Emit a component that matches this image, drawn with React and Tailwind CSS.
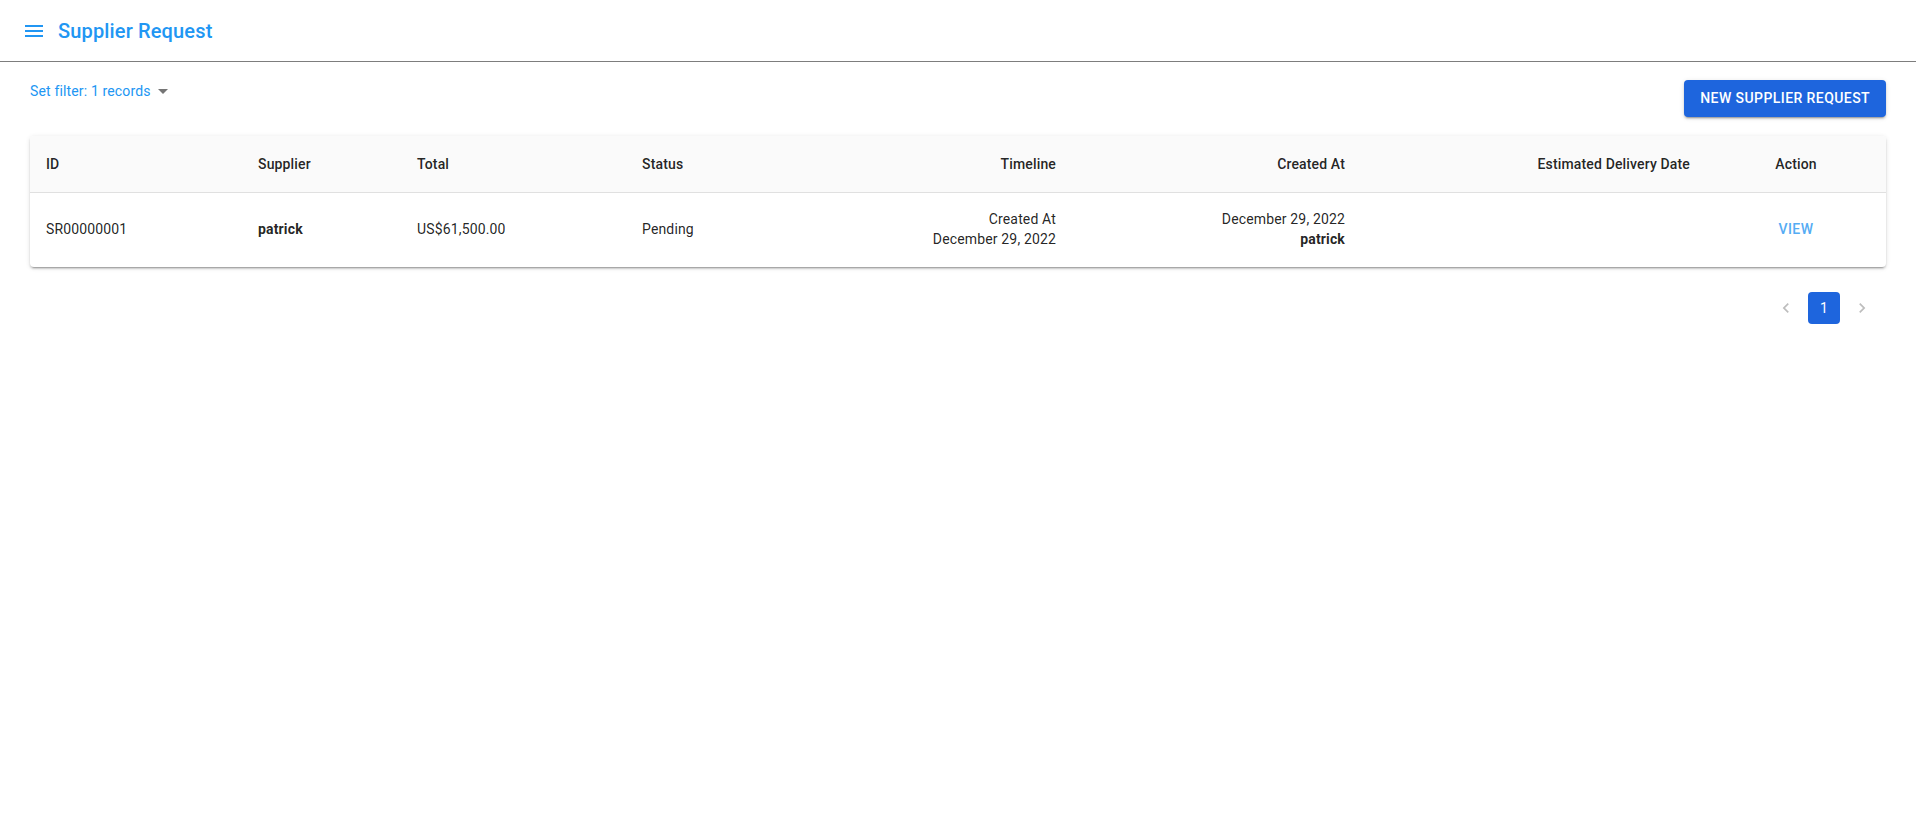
import React from 'react';

const columns = [
  { key: 'id', label: 'ID', width: 'w-[212px]', align: 'text-left' },
  { key: 'supplier', label: 'Supplier', width: 'w-[159px]', align: 'text-left' },
  { key: 'total', label: 'Total', width: 'w-[225px]', align: 'text-left' },
  { key: 'status', label: 'Status', width: 'w-[223px]', align: 'text-left' },
  { key: 'timeline', label: 'Timeline', width: 'w-[223px]', align: 'text-right' },
  { key: 'created', label: 'Created At', width: 'w-[289px]', align: 'text-right' },
  { key: 'eta', label: 'Estimated Delivery Date', width: 'w-[345px]', align: 'text-right' },
  { key: 'action', label: 'Action', width: 'w-[180px]', align: 'text-center' },
];

const rows = [
  {
    id: 'SR00000001',
    supplier: 'patrick',
    total: 'US$61,500.00',
    status: 'Pending',
    createdAt: 'December 29, 2022',
    createdBy: 'patrick',
  },
];

const MenuIcon = () => (
  <svg viewBox="0 0 24 24" className="w-6 h-6 fill-[#2196f3]">
    <path d="M3 18h18v-2H3v2zm0-5h18v-2H3v2zm0-7v2h18V6H3z" />
  </svg>
);

const ArrowDrop = () => (
  <svg viewBox="0 0 24 24" className="w-6 h-6 fill-[#757575]">
    <path d="M7 10l5 5 5-5z" />
  </svg>
);

const Chevron = ({ dir }) => (
  <svg viewBox="0 0 24 24" className="w-5 h-5 fill-[#bdbdbd]">
    {dir === 'left' ? (
      <path d="M15.41 7.41 14 6l-6 6 6 6 1.41-1.41L10.83 12z" />
    ) : (
      <path d="M10 6 8.59 7.41 13.17 12l-4.58 4.59L10 18l6-6z" />
    )}
  </svg>
);

// celda do corpo da tabela
const cell = 'px-4 pt-4 pb-[18px] leading-5 tracking-[0.01071em]';

export default function App() {
  return (
    <div className="min-h-screen bg-white font-['Roboto',sans-serif] text-[rgba(0,0,0,0.87)]">
      {/* top bar */}
      <header className="h-[62px] flex items-center pl-[22px] gap-3 border-b border-[#7d7d7d] bg-white">
        <button className="flex items-center">
          <MenuIcon />
        </button>
        <h1 className="text-[20px] font-medium text-[#2196f3] tracking-[0.0075em] leading-none">
          Supplier Request
        </h1>
      </header>

      <main className="px-[30px] pt-[18px]">
        <div className="flex justify-between items-start">
          <button className="h-[22px] flex items-center text-[14px] text-[#2196f3] tracking-[0.01071em]">
            Set filter: 1 records
            <span className="ml-0">
              <ArrowDrop />
            </span>
          </button>
          <button className="h-[37px] px-4 rounded-[4px] bg-[#1e65dd] text-white text-[14px] font-medium uppercase tracking-[0.03em] shadow-[0px_3px_1px_-2px_rgba(0,0,0,0.2),0px_2px_2px_0px_rgba(0,0,0,0.14),0px_1px_5px_0px_rgba(0,0,0,0.12)]">
            New Supplier Request
          </button>
        </div>

        {/* table card */}
        <div className="mt-[19px] bg-white rounded-[4px] overflow-hidden shadow-[0px_3px_1px_-2px_rgba(0,0,0,0.2),0px_2px_2px_0px_rgba(0,0,0,0.14),0px_1px_5px_0px_rgba(0,0,0,0.12)]">
          <table className="w-full table-fixed border-collapse text-[14px]">
            <thead>
              <tr className="bg-[#fafafa]">
                {columns.map((c) => (
                  <th
                    key={c.key}
                    className={`${c.width} ${c.align} px-4 py-4 leading-6 font-medium tracking-[0.01071em] border-b border-[#e0e0e0]`}
                  >
                    {c.label}
                  </th>
                ))}
              </tr>
            </thead>
            <tbody>
              {rows.map((r) => (
                <tr key={r.id}>
                  <td className={cell}>{r.id}</td>
                  <td className={`${cell} font-bold`}>{r.supplier}</td>
                  <td className={cell}>{r.total}</td>
                  <td className={cell}>{r.status}</td>
                  <td className={`${cell} text-right`}>
                    <div>Created At</div>
                    <div>{r.createdAt}</div>
                  </td>
                  <td className={`${cell} text-right`}>
                    <div>{r.createdAt}</div>
                    <div className="font-bold">{r.createdBy}</div>
                  </td>
                  <td className={`${cell} text-right`}></td>
                  <td className={`${cell} text-center`}>
                    <button className="text-[#55acf4] font-medium uppercase tracking-[0.03em]">View</button>
                  </td>
                </tr>
              ))}
            </tbody>
          </table>
        </div>

        {/* pagination */}
        <nav className="mt-[25px] flex justify-end items-center gap-[6px] pr-[8px]">
          <button className="w-8 h-8 flex items-center justify-center">
            <Chevron dir="left" />
          </button>
          <button className="w-8 h-8 rounded-[4px] bg-[#1e65dd] text-white text-[14px] flex items-center justify-center">
            1
          </button>
          <button className="w-8 h-8 flex items-center justify-center">
            <Chevron dir="right" />
          </button>
        </nav>
      </main>
    </div>
  );
}
